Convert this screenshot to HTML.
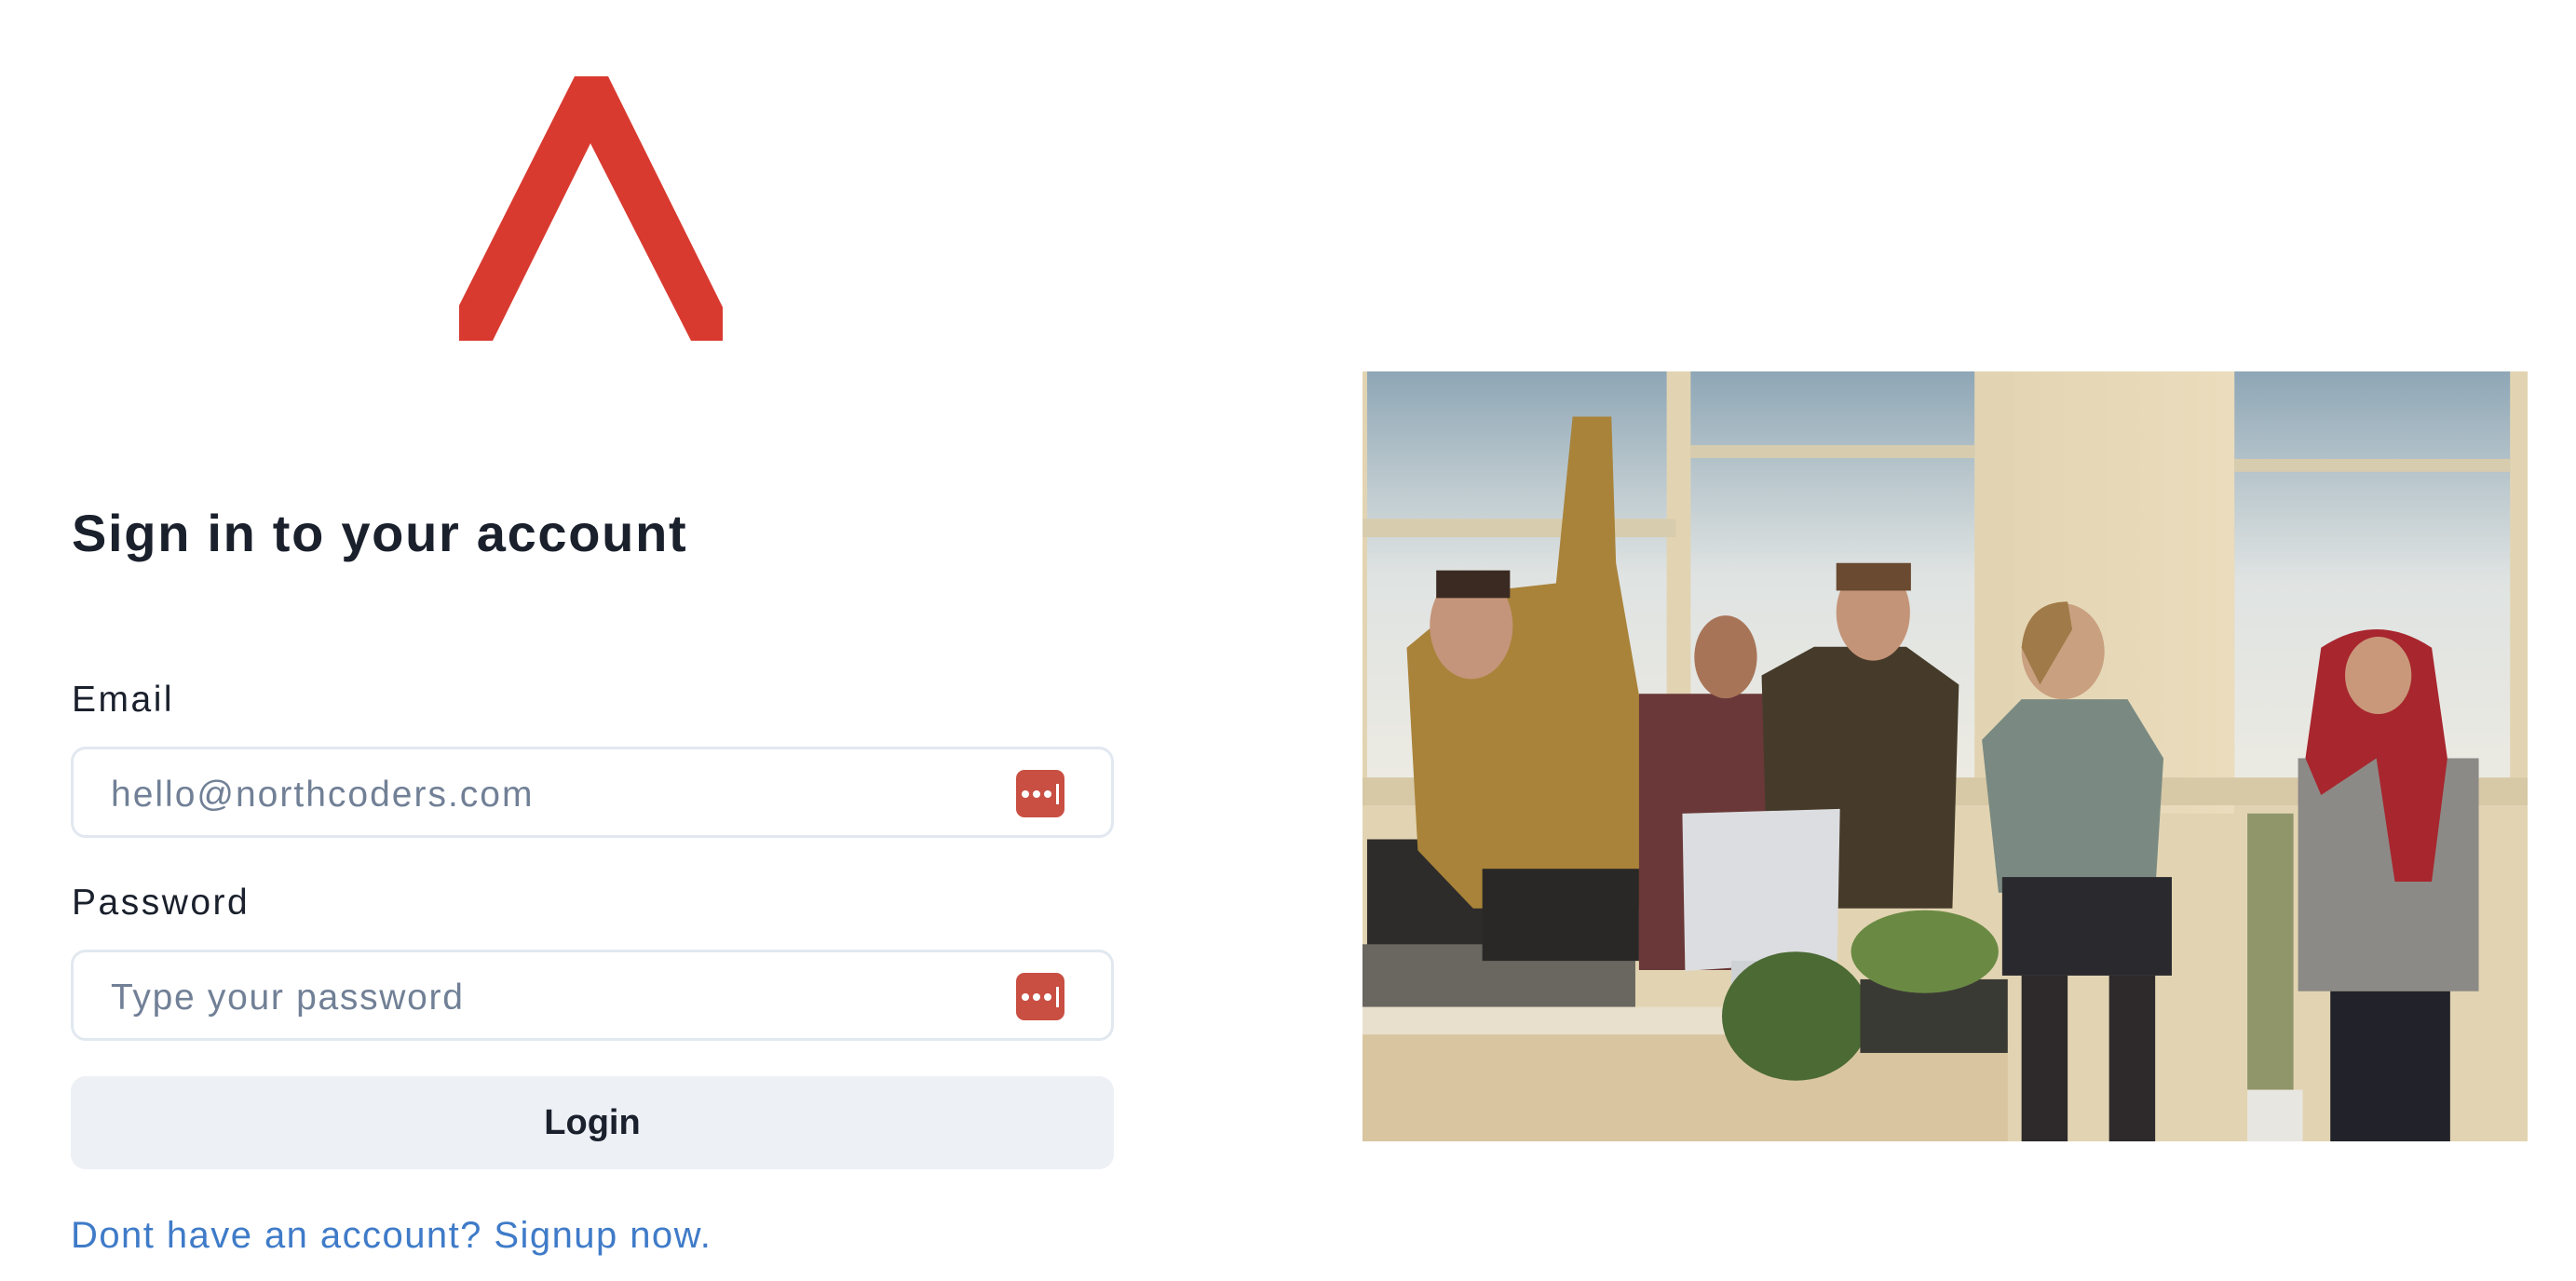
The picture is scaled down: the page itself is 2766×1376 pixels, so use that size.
<!DOCTYPE html>
<html><head><meta charset="utf-8"><style>
*{margin:0;padding:0;box-sizing:border-box}
html,body{width:2766px;height:1376px;background:#fff;overflow:hidden;font-family:"Liberation Sans",sans-serif}
.abs{position:absolute}
h1{position:absolute;left:77px;top:538px;font-size:56px;font-weight:bold;color:#1a202c;white-space:nowrap;line-height:70px;letter-spacing:1.7px}
.lbl{position:absolute;left:77px;font-size:39px;color:#1a202c;line-height:44px;letter-spacing:2.5px}
.inp{position:absolute;left:76px;width:1120px;height:98px;border:3px solid #e2e8f0;border-radius:16px;background:#fff}
.ph{position:absolute;left:40px;top:27px;font-size:39px;color:#718096;line-height:44px;white-space:nowrap}
.ic{position:absolute;right:50px;top:22px;width:52px;height:51px;background:#c94f43;border-radius:9px}
.btn{position:absolute;left:76px;top:1156px;width:1120px;height:100px;background:#edf0f5;border-radius:16px;text-align:center;font-weight:bold;font-size:38px;line-height:100px;color:#1a202c}
.lnk{position:absolute;left:76px;top:1303px;font-size:40px;color:#3f7bc8;line-height:48px;white-space:nowrap;letter-spacing:1.45px}
</style></head><body>
<svg class="abs" style="left:0;top:0" width="900" height="400">
<polygon points="617,82 653,82 776,330 776,366 742,366 634,154 529,366 493,366 493,328" fill="#d93a30"/>
</svg>
<h1>Sign in to your account</h1>
<div class="lbl" style="top:730px">Email</div>
<div class="inp" style="top:802px"><div class="ph" style="letter-spacing:2px">hello@northcoders.com</div>
<svg class="ic" viewBox="0 0 52 51"><circle cx="10" cy="26" r="4" fill="#fff"/><circle cx="22" cy="26" r="4" fill="#fff"/><circle cx="34" cy="26" r="4" fill="#fff"/><rect x="43" y="15" width="3" height="22" fill="#fff"/></svg></div>
<div class="lbl" style="top:948px">Password</div>
<div class="inp" style="top:1020px"><div class="ph" style="letter-spacing:1.7px">Type your password</div>
<svg class="ic" viewBox="0 0 52 51"><circle cx="10" cy="26" r="4" fill="#fff"/><circle cx="22" cy="26" r="4" fill="#fff"/><circle cx="34" cy="26" r="4" fill="#fff"/><rect x="43" y="15" width="3" height="22" fill="#fff"/></svg></div>
<div class="btn">Login</div>
<div class="lnk">Dont have an account? Signup now.</div>

<svg class="abs" style="left:1463px;top:399px" width="1251" height="827" viewBox="0 0 1264 836" preserveAspectRatio="none">
<defs>
<linearGradient id="win" x1="0" y1="0" x2="0" y2="1"><stop offset="0" stop-color="#8ea6b6"/><stop offset="0.25" stop-color="#b8c6cc"/><stop offset="0.5" stop-color="#dfe3e2"/><stop offset="1" stop-color="#eceae2"/></linearGradient>
<linearGradient id="wall" x1="0" y1="0" x2="1" y2="0"><stop offset="0" stop-color="#e4d6b4"/><stop offset="1" stop-color="#eadcbc"/></linearGradient>
</defs>
<rect width="1264" height="836" fill="#e2d4b2"/>
<rect x="5" y="0" width="325" height="441" fill="url(#win)"/>
<rect x="356" y="0" width="308" height="441" fill="url(#win)"/>
<rect x="707" y="0" width="239" height="480" fill="url(#wall)"/>
<rect x="946" y="0" width="299" height="452" fill="url(#win)"/>
<rect x="0" y="160" width="340" height="20" fill="#d8ccae"/>
<rect x="356" y="80" width="308" height="14" fill="#d8ccae"/>
<rect x="946" y="95" width="299" height="14" fill="#d8ccae"/>
<rect x="0" y="441" width="1264" height="30" fill="#d7c8a6"/>
<rect x="0" y="719" width="700" height="117" fill="#d9c6a0"/>
<rect x="0" y="690" width="700" height="30" fill="#e8e0cc"/>
<rect x="5" y="508" width="140" height="130" fill="#2e2c2a"/>
<rect x="0" y="622" width="296" height="68" fill="#6a6660"/>
<polygon points="228,49 270,49 275,208 305,380 300,583 120,583 60,520 48,300 120,240 210,230" fill="#a9833a"/>
<rect x="130" y="540" width="170" height="100" fill="#2a2826"/>
<ellipse cx="118" cy="276" rx="45" ry="58" fill="#c4957a"/>
<rect x="80" y="216" width="80" height="30" fill="#3a2a22"/>
<rect x="300" y="350" width="150" height="300" fill="#6a3838"/>
<ellipse cx="394" cy="310" rx="34" ry="45" fill="#a87458"/>
<polygon points="433,330 490,299 590,299 647,340 640,583 440,583" fill="#463b2a"/>
<ellipse cx="554" cy="262" rx="40" ry="52" fill="#c49478"/>
<rect x="514" y="208" width="81" height="30" fill="#6a4a30"/>
<polygon points="347,480 518,475 515,640 350,651" fill="#dcdde0"/>
<rect x="400" y="640" width="60" height="40" fill="#cfd2d4"/>
<ellipse cx="470" cy="700" rx="80" ry="70" fill="#4b6a34"/>
<rect x="540" y="660" width="160" height="80" fill="#3a3a34"/>
<ellipse cx="610" cy="630" rx="80" ry="45" fill="#6a8a44"/>
<polygon points="672,400 715,356 830,356 869,420 860,566 690,566" fill="#7a8a82"/>
<rect x="694" y="549" width="184" height="107" fill="#2a2a2e"/>
<rect x="715" y="656" width="50" height="180" fill="#2e2a2c"/>
<rect x="810" y="656" width="50" height="180" fill="#2e2a2c"/>
<ellipse cx="760" cy="304" rx="45" ry="52" fill="#c9a080"/>
<path d="M715 300 Q720 250 765 250 L770 280 L735 340 Z" fill="#a07a48"/>
<rect x="1015" y="420" width="196" height="253" fill="#8c8a86"/>
<rect x="1050" y="673" width="130" height="163" fill="#22232a"/>
<path d="M1040 300 Q1100 260 1160 300 L1177 420 L1160 554 L1120 554 L1100 420 L1040 460 L1023 420 Z" fill="#a8262e"/>
<ellipse cx="1102" cy="330" rx="36" ry="42" fill="#c9987a"/>
<rect x="960" y="480" width="50" height="300" fill="#5a6a3a" opacity="0.6"/>
<rect x="960" y="780" width="60" height="56" fill="#e8e6e0"/>
</svg>
</body></html>
